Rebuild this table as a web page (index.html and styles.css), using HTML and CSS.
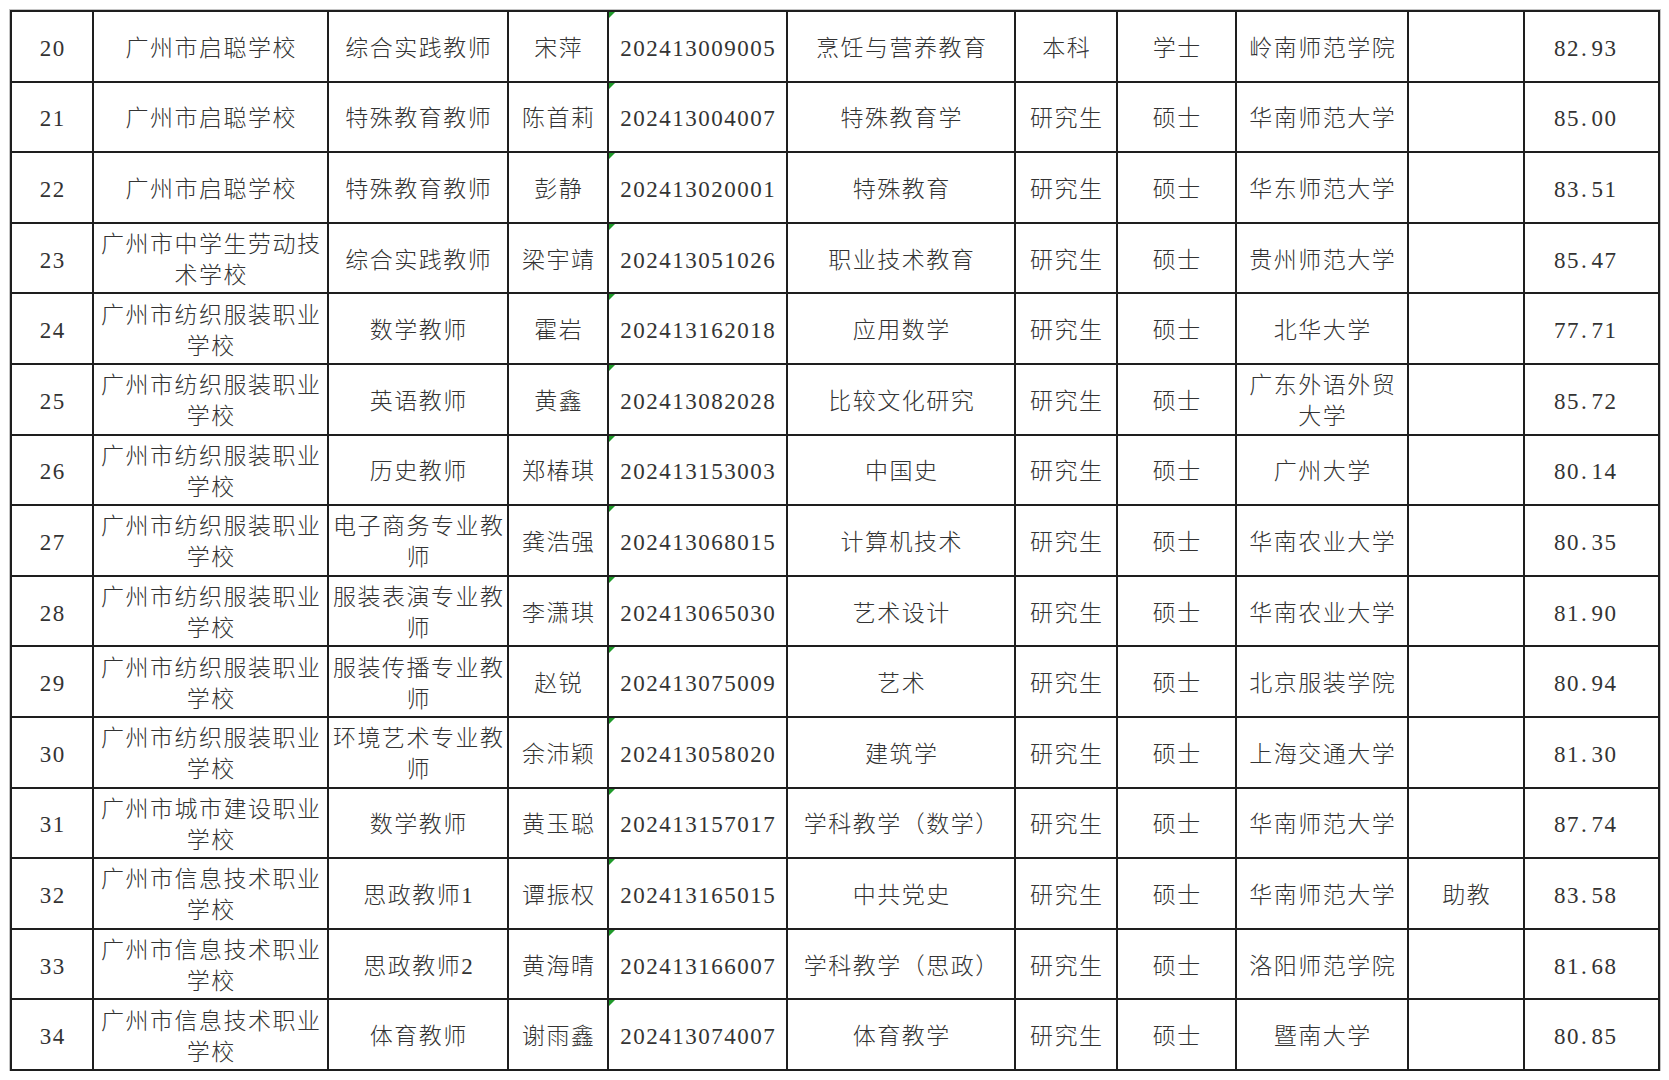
FILE: index.html
```html
<!DOCTYPE html>
<html lang="zh">
<head>
<meta charset="utf-8">
<title>名单</title>
<link rel="stylesheet" href="styles.css">
</head>
<body>
<div class="sheet">
  <div class="c">20</div><div class="c">广州市启聪学校</div><div class="c">综合实践教师</div><div class="c">宋萍</div><div class="c id">202413009005</div><div class="c">烹饪与营养教育</div><div class="c">本科</div><div class="c">学士</div><div class="c">岭南师范学院</div><div class="c"></div><div class="c">82<span class="dot">.</span>93</div>
  <div class="c">21</div><div class="c">广州市启聪学校</div><div class="c">特殊教育教师</div><div class="c">陈首莉</div><div class="c id">202413004007</div><div class="c">特殊教育学</div><div class="c">研究生</div><div class="c">硕士</div><div class="c">华南师范大学</div><div class="c"></div><div class="c">85<span class="dot">.</span>00</div>
  <div class="c">22</div><div class="c">广州市启聪学校</div><div class="c">特殊教育教师</div><div class="c">彭静</div><div class="c id">202413020001</div><div class="c">特殊教育</div><div class="c">研究生</div><div class="c">硕士</div><div class="c">华东师范大学</div><div class="c"></div><div class="c">83<span class="dot">.</span>51</div>
  <div class="c">23</div><div class="c">广州市中学生劳动技<br>术学校</div><div class="c">综合实践教师</div><div class="c">梁宇靖</div><div class="c id">202413051026</div><div class="c">职业技术教育</div><div class="c">研究生</div><div class="c">硕士</div><div class="c">贵州师范大学</div><div class="c"></div><div class="c">85<span class="dot">.</span>47</div>
  <div class="c">24</div><div class="c">广州市纺织服装职业<br>学校</div><div class="c">数学教师</div><div class="c">霍岩</div><div class="c id">202413162018</div><div class="c">应用数学</div><div class="c">研究生</div><div class="c">硕士</div><div class="c">北华大学</div><div class="c"></div><div class="c">77<span class="dot">.</span>71</div>
  <div class="c">25</div><div class="c">广州市纺织服装职业<br>学校</div><div class="c">英语教师</div><div class="c">黄鑫</div><div class="c id">202413082028</div><div class="c">比较文化研究</div><div class="c">研究生</div><div class="c">硕士</div><div class="c">广东外语外贸<br>大学</div><div class="c"></div><div class="c">85<span class="dot">.</span>72</div>
  <div class="c">26</div><div class="c">广州市纺织服装职业<br>学校</div><div class="c">历史教师</div><div class="c">郑椿琪</div><div class="c id">202413153003</div><div class="c">中国史</div><div class="c">研究生</div><div class="c">硕士</div><div class="c">广州大学</div><div class="c"></div><div class="c">80<span class="dot">.</span>14</div>
  <div class="c">27</div><div class="c">广州市纺织服装职业<br>学校</div><div class="c">电子商务专业教<br>师</div><div class="c">龚浩强</div><div class="c id">202413068015</div><div class="c">计算机技术</div><div class="c">研究生</div><div class="c">硕士</div><div class="c">华南农业大学</div><div class="c"></div><div class="c">80<span class="dot">.</span>35</div>
  <div class="c">28</div><div class="c">广州市纺织服装职业<br>学校</div><div class="c">服装表演专业教<br>师</div><div class="c">李潇琪</div><div class="c id">202413065030</div><div class="c">艺术设计</div><div class="c">研究生</div><div class="c">硕士</div><div class="c">华南农业大学</div><div class="c"></div><div class="c">81<span class="dot">.</span>90</div>
  <div class="c">29</div><div class="c">广州市纺织服装职业<br>学校</div><div class="c">服装传播专业教<br>师</div><div class="c">赵锐</div><div class="c id">202413075009</div><div class="c">艺术</div><div class="c">研究生</div><div class="c">硕士</div><div class="c">北京服装学院</div><div class="c"></div><div class="c">80<span class="dot">.</span>94</div>
  <div class="c">30</div><div class="c">广州市纺织服装职业<br>学校</div><div class="c">环境艺术专业教<br>师</div><div class="c">余沛颖</div><div class="c id">202413058020</div><div class="c">建筑学</div><div class="c">研究生</div><div class="c">硕士</div><div class="c">上海交通大学</div><div class="c"></div><div class="c">81<span class="dot">.</span>30</div>
  <div class="c">31</div><div class="c">广州市城市建设职业<br>学校</div><div class="c">数学教师</div><div class="c">黄玉聪</div><div class="c id">202413157017</div><div class="c">学科教学（数学）</div><div class="c">研究生</div><div class="c">硕士</div><div class="c">华南师范大学</div><div class="c"></div><div class="c">87<span class="dot">.</span>74</div>
  <div class="c">32</div><div class="c">广州市信息技术职业<br>学校</div><div class="c">思政教师1</div><div class="c">谭振权</div><div class="c id">202413165015</div><div class="c">中共党史</div><div class="c">研究生</div><div class="c">硕士</div><div class="c">华南师范大学</div><div class="c">助教</div><div class="c">83<span class="dot">.</span>58</div>
  <div class="c">33</div><div class="c">广州市信息技术职业<br>学校</div><div class="c">思政教师2</div><div class="c">黄海晴</div><div class="c id">202413166007</div><div class="c">学科教学（思政）</div><div class="c">研究生</div><div class="c">硕士</div><div class="c">洛阳师范学院</div><div class="c"></div><div class="c">81<span class="dot">.</span>68</div>
  <div class="c">34</div><div class="c">广州市信息技术职业<br>学校</div><div class="c">体育教师</div><div class="c">谢雨鑫</div><div class="c id">202413074007</div><div class="c">体育教学</div><div class="c">研究生</div><div class="c">硕士</div><div class="c">暨南大学</div><div class="c"></div><div class="c">80<span class="dot">.</span>85</div>
</div>
</body>
</html>
```
FILE: styles.css
```css
html, body {
  margin: 0;
  padding: 0;
  background: #ffffff;
}

body {
  font-family: "Liberation Serif", "Noto Sans CJK SC", serif;
  font-size: 23px;
  color: #333333;
}

.sheet {
  margin: 10px 0 0 10px;
  width: max-content;
  display: grid;
  grid-template-columns: 80px 233px 178px 98px 177px 226px 100px 117px 170px 114px 133px;
  grid-auto-rows: 68.6px;
  gap: 2px;
  padding: 2px;
  background: #1e1e1e;
  box-shadow: 0 0 0 1px #c4c4c4;
}

.c {
  position: relative;
  background: #ffffff;
  display: flex;
  align-items: center;
  justify-content: center;
  text-align: center;
  white-space: nowrap;
  line-height: 31px;
  letter-spacing: 1.5px;
  padding: 4px 0 0 1.5px;
  box-sizing: border-box;
  font-weight: 300;
}

.c:nth-child(11n) {
  padding-right: 13px;
}

.dot {
  display: inline-block;
  width: 0.5em;
  text-align: left;
  padding-left: 1px;
  box-sizing: border-box;
}

.id::before {
  content: "";
  position: absolute;
  left: 0;
  top: 0;
  width: 0;
  height: 0;
  border-top: 6px solid #1f9a2a;
  border-right: 6px solid transparent;
}
```
